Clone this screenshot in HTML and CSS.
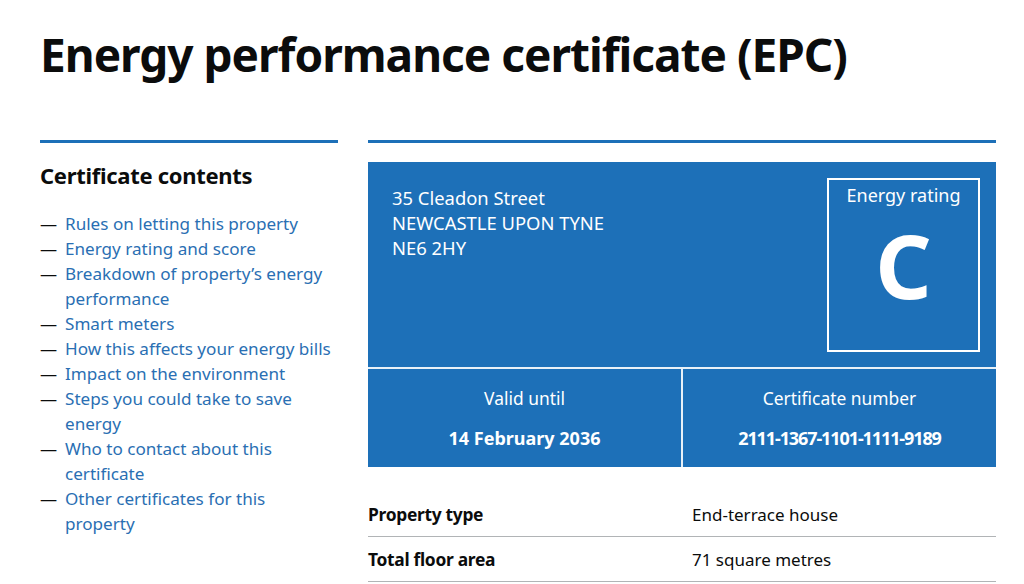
FILE: index.html
```html
<!DOCTYPE html>
<html lang="en">
<head>
<meta charset="utf-8">
<title>Energy performance certificate (EPC)</title>
<link rel="stylesheet" href="styles.css">
</head>
<body>
<div class="page">
  <h1 class="title">Energy performance certificate (EPC)</h1>
  <div class="columns">
    <aside class="sidebar">
      <h2 class="side-heading">Certificate contents</h2>
      <ul class="contents">
        <li><a href="#">Rules on letting this property</a></li>
        <li><a href="#">Energy rating and score</a></li>
        <li><a href="#">Breakdown of property’s energy performance</a></li>
        <li><a href="#">Smart meters</a></li>
        <li><a href="#">How this affects your energy bills</a></li>
        <li><a href="#">Impact on the environment</a></li>
        <li><a href="#">Steps you could take to save energy</a></li>
        <li><a href="#">Who to contact about this certificate</a></li>
        <li><a href="#">Other certificates for this property</a></li>
      </ul>
      <h2 class="side-heading share">Share this certificate</h2>
    </aside>
    <main class="main">
      <div class="epc">
        <div class="epc-top">
          <p class="address">35 Cleadon Street<br>NEWCASTLE UPON TYNE<br>NE6 2HY</p>
          <div class="rating">
            <span class="rating-label">Energy rating</span>
            <span class="rating-letter">C</span>
          </div>
        </div>
        <div class="epc-bottom">
          <div class="epc-cell">
            <span class="cell-label">Valid until</span>
            <span class="cell-value">14 February 2036</span>
          </div>
          <div class="epc-cell">
            <span class="cell-label">Certificate number</span>
            <span class="cell-value number">2111-1367-1101-1111-9189</span>
          </div>
        </div>
      </div>
      <dl class="summary">
        <div class="summary-row">
          <dt>Property type</dt>
          <dd>End-terrace house</dd>
        </div>
        <div class="summary-row">
          <dt>Total floor area</dt>
          <dd>71 square metres</dd>
        </div>
      </dl>
    </main>
  </div>
</div>
</body>
</html>
```

FILE: styles.css
```css
* { box-sizing: border-box; }
html, body { margin: 0; padding: 0; background: #fff; }
body {
  font-family: "Noto Sans", "Liberation Sans", Arial, sans-serif;
  color: #0b0c0c;
  overflow: hidden;
}
.page {
  width: 956px;
  margin-left: 40px;
}
.title {
  margin: 0;
  padding-top: 26px;
  font-size: 46px;
  line-height: 56px;
  font-weight: 700;
  letter-spacing: -1px;
  height: 140px;
}
.columns {
  display: flex;
  gap: 30px;
  align-items: flex-start;
}
.sidebar {
  width: 298px;
  border-top: 3px solid #1d70b8;
  flex: none;
}
.side-heading {
  margin: 17px 0 21px;
  font-size: 22px;
  line-height: 30px;
  font-weight: 700;
  letter-spacing: -0.3px;
}
.share { margin-top: 50px; }
.contents {
  list-style: none;
  margin: 0;
  padding: 0;
}
.contents li {
  position: relative;
  padding-left: 25px;
  padding-right: 6px;
  font-size: 17.1px;
  line-height: 25px;
}
.contents li::before {
  content: "—";
  position: absolute;
  left: 0;
  top: 0;
  color: #0b0c0c;
}
.contents a {
  color: #2a6fb3;
  text-decoration: none;
}
.main {
  flex: 1;
  border-top: 3px solid #1d70b8;
  padding-top: 19px;
}
.epc {
  background: #1d70b8;
  color: #fff;
}
.epc-top {
  display: flex;
  justify-content: space-between;
  padding: 16px 16px 16px 24px;
  height: 207px;
  border-bottom: 2px solid #e8f1f8;
}
.address {
  margin: 7px 0 0;
  font-size: 18.4px;
  line-height: 25px;
}
.rating {
  width: 153px;
  height: 174px;
  border: 2px solid #fff;
  display: flex;
  flex-direction: column;
  align-items: center;
}
.rating-label {
  font-size: 18px;
  line-height: 25px;
  margin-top: 3px;
}
.rating-letter {
  font-size: 88px;
  line-height: 90px;
  font-weight: 700;
  margin-top: 12px;
}
.epc-bottom {
  display: flex;
  height: 98px;
}
.epc-cell {
  flex: 1;
  display: flex;
  flex-direction: column;
  align-items: center;
  padding-top: 17px;
}
.epc-cell + .epc-cell {
  border-left: 2px solid #e8f1f8;
}
.cell-label {
  font-size: 17.4px;
  line-height: 25px;
}
.cell-value {
  margin-top: 15px;
  font-size: 18px;
  line-height: 25px;
  font-weight: 700;
}
.cell-value.number {
  letter-spacing: -1.1px;
}
.summary {
  margin: 25px 0 0;
}
.summary-row {
  display: flex;
  border-bottom: 1px solid #b1b4b6;
  padding: 10px 0 9px;
}
.summary dt {
  width: 324px;
  font-weight: 700;
  font-size: 17.4px;
  line-height: 25px;
  letter-spacing: -0.3px;
}
.summary dd {
  margin: 0;
  font-size: 17px;
  line-height: 25px;
}
```
